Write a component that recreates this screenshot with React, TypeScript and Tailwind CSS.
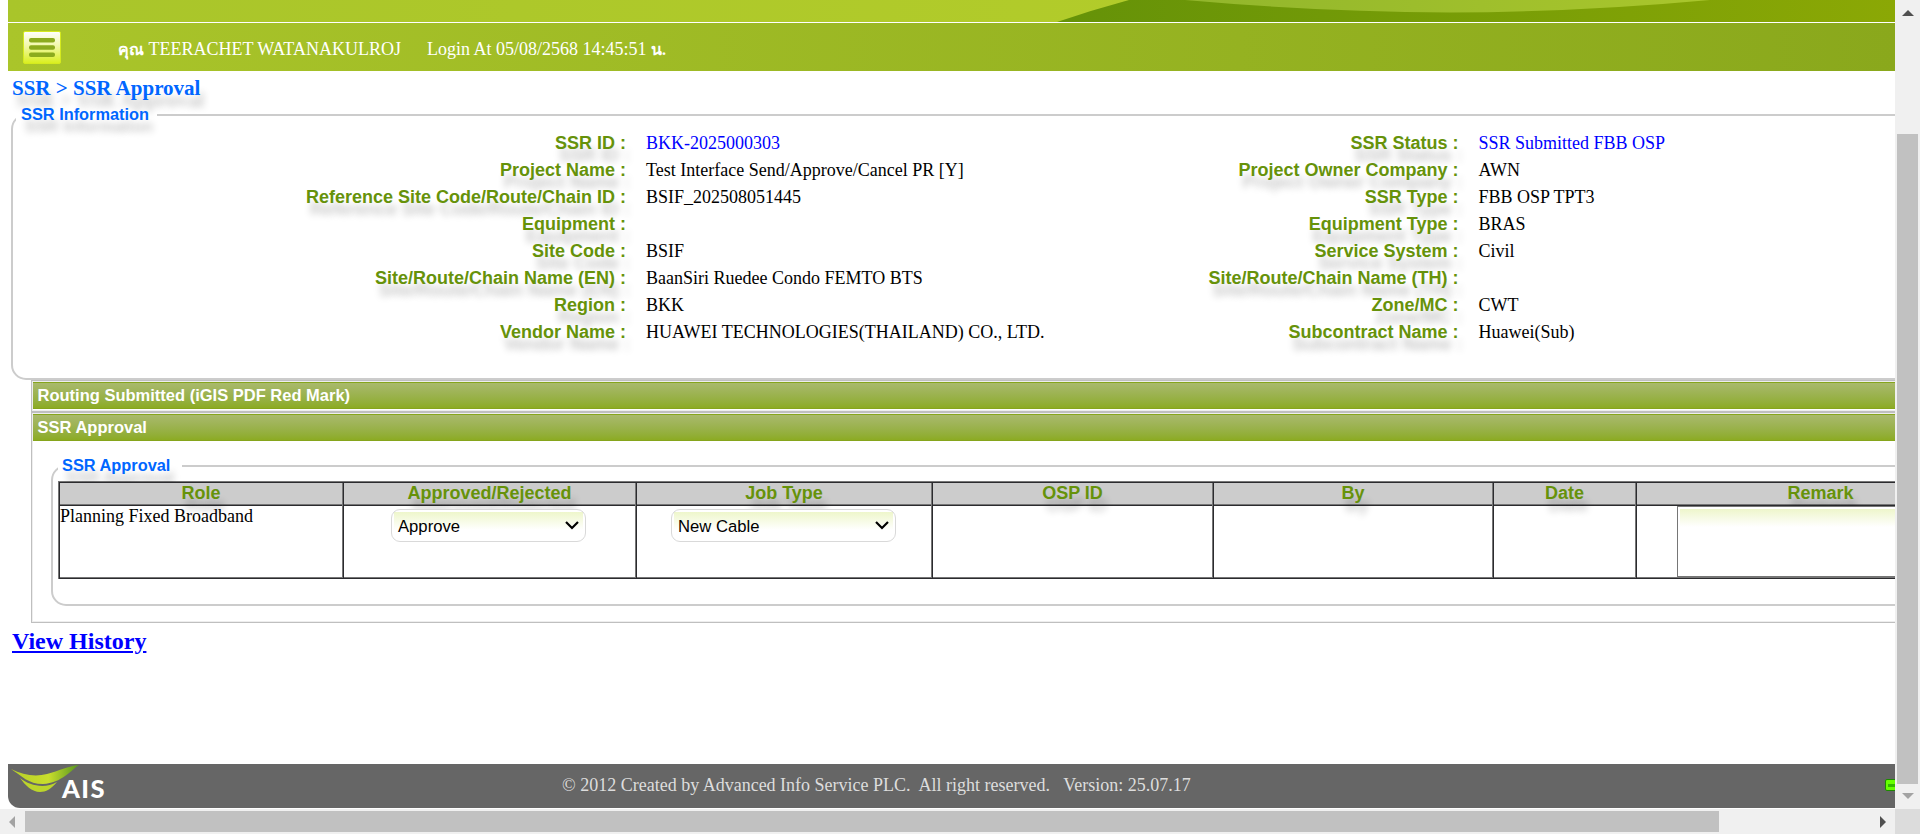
import React from 'react';

const leftInfo = [
  ['SSR ID :', 'BKK-2025000303'],
  ['Project Name :', 'Test Interface Send/Approve/Cancel PR [Y]'],
  ['Reference Site Code/Route/Chain ID :', 'BSIF_202508051445'],
  ['Equipment :', ''],
  ['Site Code :', 'BSIF'],
  ['Site/Route/Chain Name (EN) :', 'BaanSiri Ruedee Condo FEMTO BTS'],
  ['Region :', 'BKK'],
  ['Vendor Name :', 'HUAWEI TECHNOLOGIES(THAILAND) CO., LTD.'],
];

const rightInfo = [
  ['SSR Status :', 'SSR Submitted FBB OSP'],
  ['Project Owner Company :', 'AWN'],
  ['SSR Type :', 'FBB OSP TPT3'],
  ['Equipment Type :', 'BRAS'],
  ['Service System :', 'Civil'],
  ['Site/Route/Chain Name (TH) :', ''],
  ['Zone/MC :', 'CWT'],
  ['Subcontract Name :', 'Huawei(Sub)'],
];

function InfoColumn({ rows }: { rows: string[][] }) {
  return (
    <div className="w-[832.5px] shrink-0">
      {rows.map(([label, value], i) => (
        <div key={label} className="flex h-[27px] items-center whitespace-pre text-[18px]">
          <div className="w-[613px] shrink-0 text-right font-['Liberation_Sans',Arial,sans-serif] font-bold text-[#66920a] [text-shadow:4px_12px_7px_rgba(0,0,0,0.22)]">
            {label}
          </div>
          <div className={`ml-[20px] ${i === 0 ? 'text-[#0000ff]' : 'text-black'}`}>{value}</div>
        </div>
      ))}
    </div>
  );
}

function Banner() {
  return (
    <svg className="block h-[22px] w-[1887px] shrink-0" viewBox="8 0 1887 22" preserveAspectRatio="none">
      <defs>
        <linearGradient id="base" x1="0" x2="1">
          <stop offset="0" stopColor="#a9c52a" />
          <stop offset="1" stopColor="#b8d02a" />
        </linearGradient>
        <linearGradient id="dark" x1="0" x2="1">
          <stop offset="0" stopColor="#659208" />
          <stop offset="1" stopColor="#8ba805" />
        </linearGradient>
        <linearGradient id="arc" x1="0" x2="1">
          <stop offset="0" stopColor="#92b62c" />
          <stop offset="1" stopColor="#a9c62c" />
        </linearGradient>
      </defs>
      <rect x="8" width="1887" height="22" fill="url(#base)" />
      <path d="M1057 22 Q1092 10 1129 0 H1895 V22 Z" fill="url(#dark)" />
      <path d="M1185 0 Q1320 12 1450 12.5 Q1580 12 1710 0 Z" fill="url(#arc)" />
    </svg>
  );
}

function MenuButton() {
  return (
    <svg className="h-[33px] w-[38px]" viewBox="0 0 38 33">
      <defs>
        <linearGradient id="menu" x2="0" y2="1">
          <stop offset="0" stopColor="#ffffff" />
          <stop offset="0.45" stopColor="#f1f8a8" />
          <stop offset="1" stopColor="#d9ef1c" />
        </linearGradient>
      </defs>
      <rect x="0.5" y="0.5" width="37" height="32" rx="1.5" fill="url(#menu)" stroke="#d5ea1e" />
      <rect x="6" y="7" width="26" height="4.5" rx="2" fill="#8cab1e" />
      <rect x="6" y="14.3" width="26" height="4.5" rx="2" fill="#8cab1e" />
      <rect x="6" y="21.6" width="26" height="4.5" rx="2" fill="#8cab1e" />
    </svg>
  );
}

function Select({ text, width }: { text: string; width: string }) {
  return (
    <div
      className={`${width} relative z-20 flex h-[33px] items-center justify-between rounded-[9px] border border-[#d9d9d9] bg-white bg-[linear-gradient(#eef6cb,#ffffff)] bg-[length:calc(100%-4px)_18px] bg-[position:2px_2px] bg-no-repeat px-[6px] font-["Liberation_Sans",Arial,sans-serif] text-[16.67px] text-black`}
    >
      <span className="pt-[2px]">{text}</span>
      <svg className="h-[9px] w-[14px]" viewBox="0 0 14 9">
        <path d="M1 1 L7 7 L13 1" fill="none" stroke="#000" strokeWidth="2.2" />
      </svg>
    </div>
  );
}

const columns = [
  { name: 'Role', width: 'w-[284px]' },
  { name: 'Approved/Rejected', width: 'w-[293px]' },
  { name: 'Job Type', width: 'w-[296px]' },
  { name: 'OSP ID', width: 'w-[281px]' },
  { name: 'By', width: 'w-[280px]' },
  { name: 'Date', width: 'w-[143px]' },
  { name: 'Remark', width: 'w-[369px]' },
];

function Cell({ name }: { name: string }) {
  if (name === 'Role') return <div className="text-[18px] leading-[21px] whitespace-nowrap">Planning Fixed Broadband</div>;
  if (name === 'Approved/Rejected')
    return (
      <div className="pt-[3px] pl-[47px]">
        <Select text="Approve" width="w-[195px]" />
      </div>
    );
  if (name === 'Job Type')
    return (
      <div className="pt-[3px] pl-[34px]">
        <Select text="New Cable" width="w-[225px]" />
      </div>
    );
  if (name === 'Remark')
    return (
      <div className="relative z-20 ml-[40px] h-[71px] w-[286px] border border-[#767676] bg-white bg-[linear-gradient(#eef6cb,#ffffff)] bg-[length:calc(100%-4px)_18px] bg-[position:2px_2px] bg-no-repeat" />
    );
  return null;
}

function ApprovalTable() {
  return (
    <div className="flex w-max border-t border-l border-[#767676]">
      {columns.map((c) => (
        <div key={c.name} className={`${c.width} shrink-0 border-t border-l border-[#2b2b2e]`}>
          <div className="h-[21px] border-r border-[#767676] bg-[#cccccc] text-center font-['Liberation_Sans',Arial,sans-serif] text-[18px] leading-[20px] font-bold text-[#66920a]">
            <span className="relative z-10 [text-shadow:4px_12px_7px_rgba(0,0,0,0.22)]">{c.name}</span>
          </div>
          <div className="h-[74px] border-t border-r border-b border-[#767676]">
            <div className="h-[72px] border-t border-[#2b2b2e]">
              <Cell name={c.name} />
            </div>
          </div>
          <div className="-ml-px h-px bg-[#2b2b2e]" />
        </div>
      ))}
    </div>
  );
}

function SectionBar({ text }: { text: string }) {
  return (
    <div className="flex h-[27px] items-center border-y border-[#86a51c] bg-linear-to-b from-[#a9b96c] to-[#8cab22] pl-[4.5px] font-['Liberation_Sans',Arial,sans-serif] text-[16.5px] font-bold text-white">
      {text}
    </div>
  );
}

function Logo() {
  return (
    <div className="flex h-[44px] w-[110px] shrink-0">
      <svg className="h-[40px] w-[72px] shrink-0" viewBox="0 0 72 40">
        <defs>
          <linearGradient id="leaf" x1="0" x2="1">
            <stop offset="0" stopColor="#b6cf28" />
            <stop offset="0.55" stopColor="#c9de2c" />
            <stop offset="1" stopColor="#55951f" />
          </linearGradient>
        </defs>
        <path d="M3 5 C15 11 27 13 39 10 C51 7 60 2 71 1 C63 6 54 19 35 20 C20 20 14 12 3 5Z" fill="url(#leaf)" />
        <path d="M12 14 C22 22 37 25 49 18 C43 25 38 28 32 28 C24 28 17 21 12 14Z" fill="#bcd52b" />
      </svg>
      <span className="-ml-[18px] mt-[9px] font-['Lato',sans-serif] text-[25.5px] leading-[30px] font-black tracking-[1.4px] text-white">AIS</span>
    </div>
  );
}

function VerticalScrollbar() {
  return (
    <div className="flex h-[809px] w-[25px] shrink-0 flex-col items-center bg-[#f0f0f0]">
      <svg className="mt-[10px] h-[6px] w-[12px]" viewBox="0 0 12 6">
        <polygon points="6,0 12,6 0,6" fill="#505050" />
      </svg>
      <div className="mt-[118px] h-[650px] w-[21px] bg-[#c1c1c1]" />
      <svg className="mt-[9px] h-[6px] w-[12px]" viewBox="0 0 12 6">
        <polygon points="0,0 12,0 6,6" fill="#a3a3a3" />
      </svg>
    </div>
  );
}

function HorizontalScrollbar() {
  return (
    <div className="flex h-[25px] items-center bg-[#f0f0f0]">
      <svg className="ml-[9px] h-[12px] w-[6px]" viewBox="0 0 6 12">
        <polygon points="6,0 6,12 0,6" fill="#a3a3a3" />
      </svg>
      <div className="ml-[10px] h-[21px] w-[1694px] bg-[#c1c1c1]" />
      <svg className="ml-[161px] h-[12px] w-[6px]" viewBox="0 0 6 12">
        <polygon points="0,0 6,6 0,12" fill="#505050" />
      </svg>
      <div className="ml-auto h-[25px] w-[25px] bg-[#dcdcdc]" />
    </div>
  );
}

export default function App() {
  return (
    <div className="flex h-[834px] w-[1920px] flex-col overflow-hidden bg-white font-['Liberation_Serif',serif]">
      <div className="flex h-[809px]">
        <main className="flex w-[1895px] shrink-0 flex-col overflow-hidden pl-[8px]">
          <Banner />
          <div className="mt-px flex h-[48px] shrink-0 items-center bg-linear-to-r from-[#aac52a] to-[#8aa81c] pl-[15px] text-[18px] whitespace-nowrap text-white">
            <MenuButton />
            <span className="ml-[57px] w-[309px] pt-[4px]">
              <span className="text-[16px] font-bold">คุณ</span> TEERACHET WATANAKULROJ
            </span>
            <span className="pt-[4px]">
              Login At 05/08/2568 14:45:51 <span className="text-[16px] font-bold">น.</span>
            </span>
          </div>
          <h1 className="mt-[5px] h-[24px] shrink-0 pl-[4px] text-[21px] leading-[24px] font-bold text-[#0066ff] [text-shadow:4px_12px_7px_rgba(0,0,0,0.22)]">
            SSR &gt; SSR Approval
          </h1>

          <fieldset className="mt-[4px] ml-[3px] h-[276px] w-[2100px] shrink-0 rounded-[15px] border-2 border-[#cccccc]">
            <legend className="ml-[3px] h-[22px] w-[141px] pl-[5px] font-['Liberation_Sans',Arial,sans-serif] text-[16.35px] leading-[21px] font-bold whitespace-nowrap text-[#0066ff] [text-shadow:4px_12px_7px_rgba(0,0,0,0.22)]">
              SSR Information
            </legend>
            <div className="mt-[4px] flex">
              <InfoColumn rows={leftInfo} />
              <InfoColumn rows={rightInfo} />
            </div>
          </fieldset>

          <section className="ml-[23px] w-[2100px] shrink-0">
            <div className="h-[32px] border border-[#bfbfbf]">
              <div className="h-[30px] border border-[#eeeeee]">
                <SectionBar text="Routing Submitted (iGIS PDF Red Mark)" />
              </div>
            </div>
            <div className="h-[211px] border border-[#bfbfbf]">
              <div className="h-[209px] border border-[#eeeeee]">
                <SectionBar text="SSR Approval" />
                <fieldset className="mt-[14px] ml-[18px] h-[151px] w-[2040px] rounded-[15px] border-2 border-[#cccccc]">
                  <legend className="ml-[5px] h-[22px] w-[124px] pl-[4px] font-['Liberation_Sans',Arial,sans-serif] text-[16.35px] leading-[21px] font-bold whitespace-nowrap text-[#0066ff] [text-shadow:4px_12px_7px_rgba(0,0,0,0.22)]">
                    SSR Approval
                  </legend>
                  <div className="mt-[4px] ml-[5px]">
                    <ApprovalTable />
                  </div>
                </fieldset>
              </div>
            </div>
          </section>

          <a className="mt-[4px] ml-[4px] shrink-0 self-start text-[24px] leading-[28px] font-bold text-[#0000ff] underline">View History</a>

          <footer className="mt-auto mb-px flex h-[44px] shrink-0 items-center rounded-bl-[12px] bg-[#666666]">
            <Logo />
            <p className="ml-[444px] pb-[2px] text-[18px] whitespace-pre text-[#dddddd]">
              {'© 2012 Created by Advanced Info Service PLC.  All right reserved.   Version: 25.07.17'}
            </p>
            <div className="-mr-[4px] mb-[2px] ml-auto flex h-[12px] w-[14px] items-center rounded-[2px] border border-[#1c8a00] bg-[#66ff00] pl-[2px]">
              <div className="h-[3px] w-[8px] bg-[#33b800]" />
            </div>
          </footer>
        </main>
        <VerticalScrollbar />
      </div>
      <HorizontalScrollbar />
    </div>
  );
}
